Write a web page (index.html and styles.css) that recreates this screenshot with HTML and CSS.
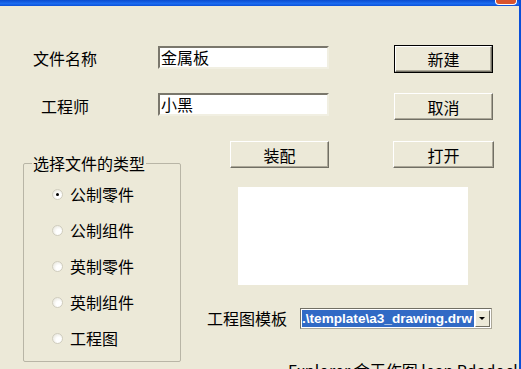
FILE: index.html
```html
<!DOCTYPE html>
<html lang="zh-CN">
<head>
    <meta charset="UTF-8">
    <title>新建文件</title>
    <link rel="stylesheet" href="styles.css">
</head>
<body>
<div class="frame">
    <div class="titlebar"><span class="close"></span></div>

    <div class="row row-top">
        <label class="caption">文件名称</label>
        <div class="field">金属板</div>
        <button class="btn btn-default">新建</button>
    </div>

    <div class="row row-second">
        <label class="caption">工程师</label>
        <div class="field">小黑</div>
        <button class="btn">取消</button>
    </div>

    <div class="lower">
        <fieldset class="group">
            <legend>选择文件的类型</legend>
            <div class="option"><span class="radio checked"></span>公制零件</div>
            <div class="option"><span class="radio"></span>公制组件</div>
            <div class="option"><span class="radio"></span>英制零件</div>
            <div class="option"><span class="radio"></span>英制组件</div>
            <div class="option"><span class="radio"></span>工程图</div>
        </fieldset>

        <div class="side">
            <div class="side-buttons">
                <button class="btn btn-narrow">装配</button>
                <button class="btn">打开</button>
            </div>
            <div class="preview"></div>
            <div class="template">
                <span class="template-label">工程图模板</span>
                <div class="combo">
                    <span class="combo-text">.\template\a3_drawing.drw</span>
                    <span class="combo-arrow"></span>
                </div>
            </div>
            <div class="status">Explorer 金王作图 lean Pdadock</div>
        </div>
    </div>
</div>
</body>
</html>
```

FILE: styles.css
```css
body {
    margin: 0;
    background: #ece9d8;
    font-family: "Noto Sans CJK SC", "DejaVu Sans", sans-serif;
    font-size: 16px;
    color: #000;
    overflow: hidden;
}

.frame {
    width: 521px;
    height: 369px;
    box-sizing: border-box;
    border-right: 2px solid #0a4fd8;
    overflow: hidden;
}

.titlebar {
    height: 6px;
    background: linear-gradient(#0a4cd0, #1c6cf0 60%, #0a50d8);
    display: flex;
    justify-content: flex-end;
}

.close {
    width: 20px;
    height: 4px;
    margin-right: 2px;
    background: #d9542e;
    border: 1px solid #fff;
    border-top: none;
    border-radius: 0 0 4px 4px;
}

.row {
    display: flex;
    align-items: flex-start;
}

.row > * {
    flex-shrink: 0;
}

.row-top {
    margin-top: 39px;
}

.row-second {
    margin-top: 20px;
}

.caption {
    width: 130px;
    text-align: center;
    line-height: 22px;
    margin-top: 2px;
}

.field {
    width: 171px;
    height: 23px;
    box-sizing: border-box;
    margin-left: 28px;
    padding-left: 1px;
    background: #fff;
    border: 2px solid #f1efe2;
    border-top-color: #7a776c;
    border-left-color: #7a776c;
    line-height: 19px;
    font-size: 16px;
}

.row-top .field {
    margin-top: 1px;
}

.btn {
    width: 99px;
    height: 27px;
    margin-left: 65px;
    padding: 0;
    font-family: inherit;
    font-size: 16px;
    background: #ece9d8;
    border: 1px solid;
    border-color: #fff #716f64 #716f64 #fff;
    box-shadow: inset -1px -1px #aca899;
}

.btn-default {
    height: 28px;
    outline: 1px solid #000;
    outline-offset: -1px;
    border: 2px solid;
    border-color: #fff #716f64 #716f64 #fff;
}

.lower {
    display: flex;
    margin-top: 21px;
}

.lower > * {
    flex-shrink: 0;
}

.group {
    width: 158px;
    height: 208px;
    box-sizing: border-box;
    margin: 13px 0 0 23px;
    padding: 4px 0 0 28px;
    border: 1px solid #b8b5a6;
    border-radius: 2px;
}

.group legend {
    padding: 0 1px;
    margin-left: -20px;
    line-height: 18px;
}

.option {
    display: flex;
    align-items: center;
    gap: 7px;
    height: 36px;
}

.radio {
    width: 11px;
    height: 11px;
    box-sizing: border-box;
    border-radius: 50%;
    border: 1px solid #d0cdbf;
    background: radial-gradient(circle at 65% 65%, #fff 30%, #e2e0d4 100%);
    position: relative;
}

.radio.checked::after {
    content: "";
    position: absolute;
    left: 3px;
    top: 3px;
    width: 3px;
    height: 3px;
    border-radius: 50%;
    background: #000;
}

.side {
    margin-left: 26px;
}

.side-buttons {
    display: flex;
    padding-left: 23px;
}

.side-buttons .btn {
    margin-left: 0;
}

.side-buttons .btn-narrow {
    margin-right: 64px;
}

.side-buttons .btn:last-child {
    width: 101px;
}

.preview {
    width: 230px;
    height: 98px;
    margin: 19px 0 0 31px;
    background: #fff;
}

.template {
    display: flex;
    align-items: center;
    margin-top: 21px;
}

.template-label {
    width: 80px;
}

.combo {
    display: flex;
    align-items: center;
    width: 192px;
    height: 21px;
    box-sizing: border-box;
    margin-left: 13px;
    background: #fff;
    border: 1px solid #aca899;
    border-top-color: #716f64;
    border-left-color: #716f64;
    padding-left: 1px;
}

.combo-text {
    width: 172px;
    height: 17px;
    background: #316ac5;
    color: #fff;
    font-family: "Liberation Sans", sans-serif;
    font-weight: bold;
    font-size: 13.6px;
    line-height: 17px;
    white-space: nowrap;
    overflow: hidden;
}

.combo-arrow {
    width: 15px;
    height: 17px;
    box-sizing: border-box;
    margin-left: 1px;
    background: #ece9d8;
    border: 1px solid;
    border-color: #fff #716f64 #716f64 #fff;
    position: relative;
}

.combo-arrow::after {
    content: "";
    position: absolute;
    left: 3px;
    top: 6px;
    border: 3px solid transparent;
    border-top: 3px solid #000;
    border-left-width: 3.5px;
    border-right-width: 3.5px;
}

.status {
    margin: 28px 0 0 81px;
    font-size: 16px;
    white-space: nowrap;
}
```
